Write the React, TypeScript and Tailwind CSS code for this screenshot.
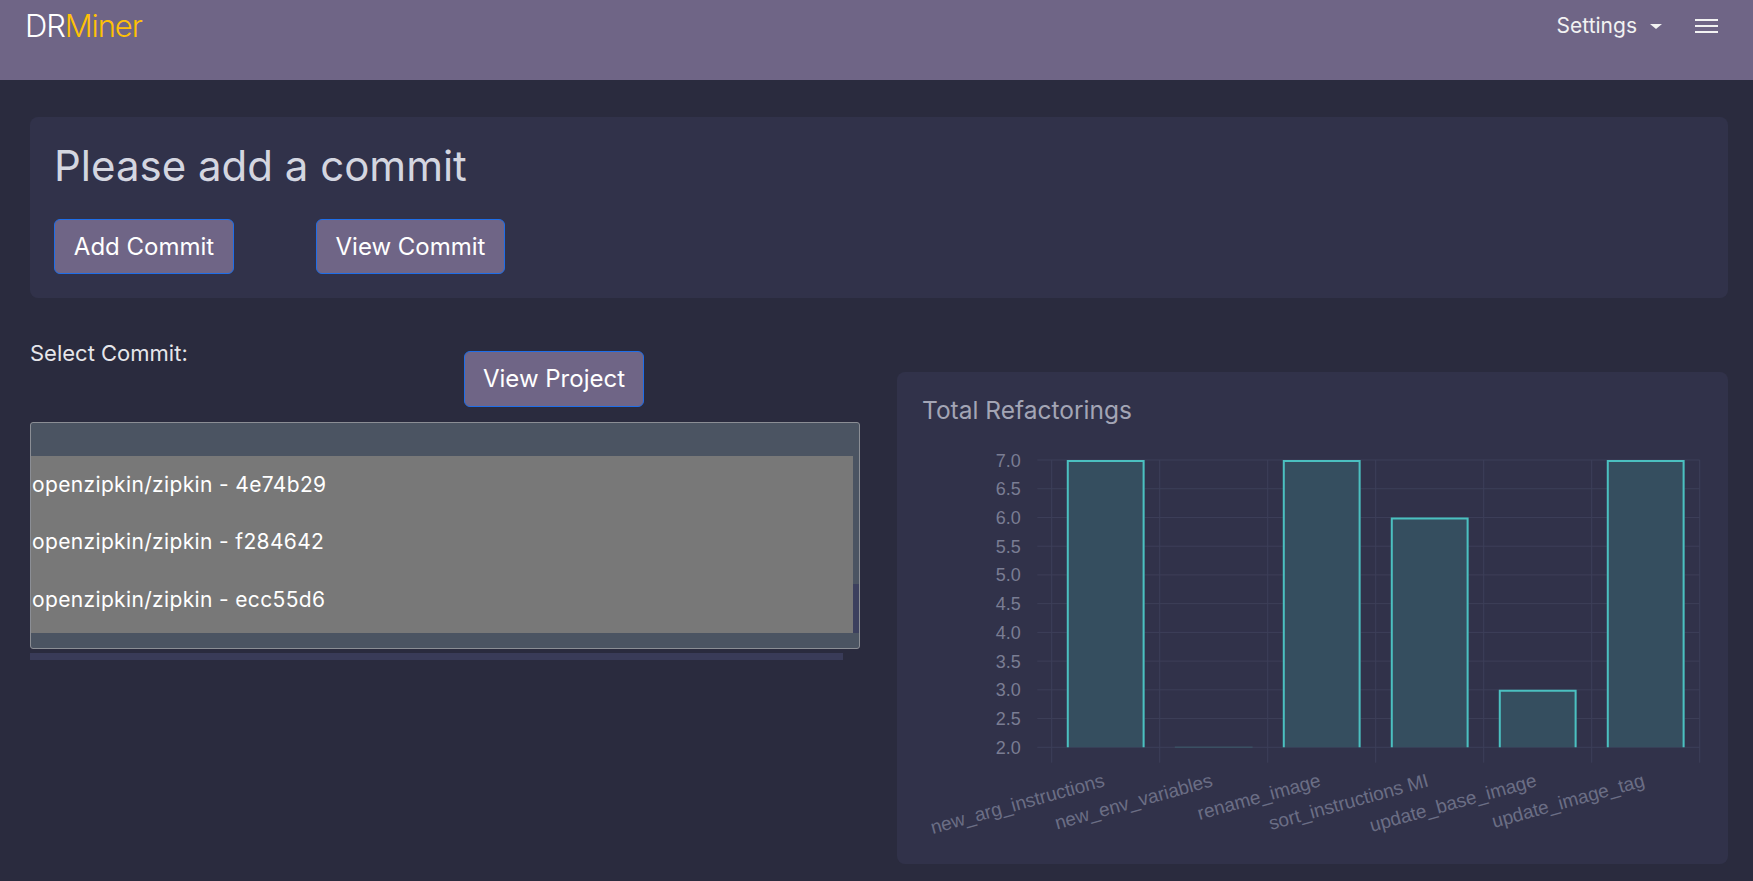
import React from "react";

const bars = [
  { label: "new_arg_instructions", value: 7 },
  { label: "new_env_variables", value: 2 },
  { label: "rename_image", value: 7 },
  { label: "sort_instructions MI", value: 6 },
  { label: "update_base_image", value: 3 },
  { label: "update_image_tag", value: 7 },
];

const commits = [
  "openzipkin/zipkin - 4e74b29",
  "openzipkin/zipkin - f284642",
  "openzipkin/zipkin - ecc55d6",
];

function Chart() {
  const left = 130.7;
  const right = 778.7;
  const top = 35;
  const bottom = 322.3;
  const step = (bottom - top) / 10;
  const cat = (right - left) / 6;
  const yOf = (v: number) => top + ((7 - v) / 5) * (bottom - top);
  const ticks = Array.from({ length: 11 }, (_, i) => 7 - i * 0.5);

  return (
    <svg width="783" height="414" viewBox="0 0 783 414" className="block">
      {ticks.map((t, i) => (
        <g key={t}>
          <line x1={116.3} x2={right} y1={top + i * step} y2={top + i * step} stroke="#3d3f59" strokeWidth="1" />
          <text
            x={99.7}
            y={top + i * step + 6.5}
            textAnchor="end"
            fontSize="18"
            fontFamily="'Liberation Sans', Arial, sans-serif"
            fill="#7a7d93"
          >
            {t.toFixed(1)}
          </text>
        </g>
      ))}
      {Array.from({ length: 7 }, (_, i) => (
        <line key={i} x1={left + i * cat} x2={left + i * cat} y1={top} y2={337.7} stroke="#3d3f59" strokeWidth="1" />
      ))}
      {bars.map((b, i) => {
        const cx = left + cat * i + cat / 2;
        const w = 77.8;
        const x = cx - w / 2;
        const y = yOf(b.value);
        return (
          <g key={b.label}>
            {b.value > 2 ? (
              <>
                <rect x={x} y={y} width={w} height={bottom - y} fill="#354e5f" />
                <path
                  d={`M${x + 1} ${bottom} V${y + 1} H${x + w - 1} V${bottom}`}
                  fill="none"
                  stroke="#4bc0c0"
                  strokeWidth="2"
                />
              </>
            ) : (
              <line x1={x} x2={x + w} y1={bottom} y2={bottom} stroke="#3a5063" strokeWidth="1.5" />
            )}
            <text
              x={cx}
              y={361}
              textAnchor="end"
              fontSize="19"
              fontFamily="'Liberation Sans', Arial, sans-serif"
              fill="#6b6e85"
              transform={`rotate(-15.5 ${cx} 361)`}
            >
              {b.label}
            </text>
          </g>
        );
      })}
    </svg>
  );
}

export default function App() {
  return (
    <div className="min-h-screen bg-[#2a2b3e] font-['Inter',sans-serif]">
      <nav className="h-[80px] bg-[#6f6586] flex items-start justify-between pl-[25px] pr-[35px]">
        <div className="mt-[6px] text-[31px] leading-[40px] font-light tracking-[-1.1px] text-white">
          DR<span className="text-[#ffc107]">Miner</span>
        </div>
        <div className="flex items-center mt-[10px]">
          <span className="text-[21px] leading-[32px] text-[#f2f2f2]">Settings</span>
          <span className="ml-[13px] mt-[1px] w-0 h-0 border-l-[6px] border-r-[6px] border-t-[5px] border-l-transparent border-r-transparent border-t-[#f2f2f2]" />
          <div className="ml-[33px] w-[23px] flex flex-col gap-[4px]">
            <span className="block h-[2px] bg-[#f2f2f2]" />
            <span className="block h-[2px] bg-[#f2f2f2]" />
            <span className="block h-[2px] bg-[#f2f2f2]" />
          </div>
        </div>
      </nav>

      <div className="pl-[30px] pr-[25px]">
        <div className="mt-[37px] h-[181px] rounded-[8px] bg-[#31324a] pt-[24px] pl-[24px]">
          <h1 className="text-[42px] leading-[50px] text-[#d4d6e0]">Please add a commit</h1>
          <div className="mt-[28px] flex gap-[82px]">
            <button className="w-[180px] h-[55px] rounded-[6px] border border-[#1f6ee8] bg-[#6f6586] text-[24px] text-white">
              Add Commit
            </button>
            <button className="w-[189px] h-[55px] rounded-[6px] border border-[#1f6ee8] bg-[#6f6586] text-[24px] text-white">
              View Commit
            </button>
          </div>
        </div>

        <div className="mt-[39px] flex items-start gap-[37px]">
          <div className="w-[831px]">
            <div className="flex items-start">
              <label className="w-[434px] text-[22px] leading-[33px] text-[#e6e6ea]">Select Commit:</label>
              <button className="mt-[14px] w-[180px] h-[56px] rounded-[6px] border border-[#1f6ee8] bg-[#6f6586] text-[24px] text-white">
                View Project
              </button>
            </div>
            <div className="mt-[15px] h-[227px] rounded-[3px] border border-[#8b8e95] bg-[#4b5462] flex flex-col">
              <div className="h-[33px]" />
              <div className="flex">
                <div className="w-[822px] bg-[#787878]">
                  {commits.map((c) => (
                    <div key={c} className="h-[57.33px] flex items-center pl-[1px] text-[21px] tracking-[0.35px] text-white">
                      {c}
                    </div>
                  ))}
                </div>
                <div className="flex-1 flex flex-col">
                  <div className="h-[128px]" />
                  <div className="h-[49px] bg-[#3c405e]" />
                </div>
              </div>
            </div>
            <div className="mt-[4px] h-[7px] w-[813px] bg-[#393b58]" />
          </div>

          <div className="mt-[35px] w-[831px] h-[492px] rounded-[8px] bg-[#31324a] px-6 pt-6">
            <div className="pl-[1px] text-[24.5px] leading-[29px] text-[#a3a5b5]">Total Refactorings</div>
            <Chart />
          </div>
        </div>
      </div>
    </div>
  );
}
